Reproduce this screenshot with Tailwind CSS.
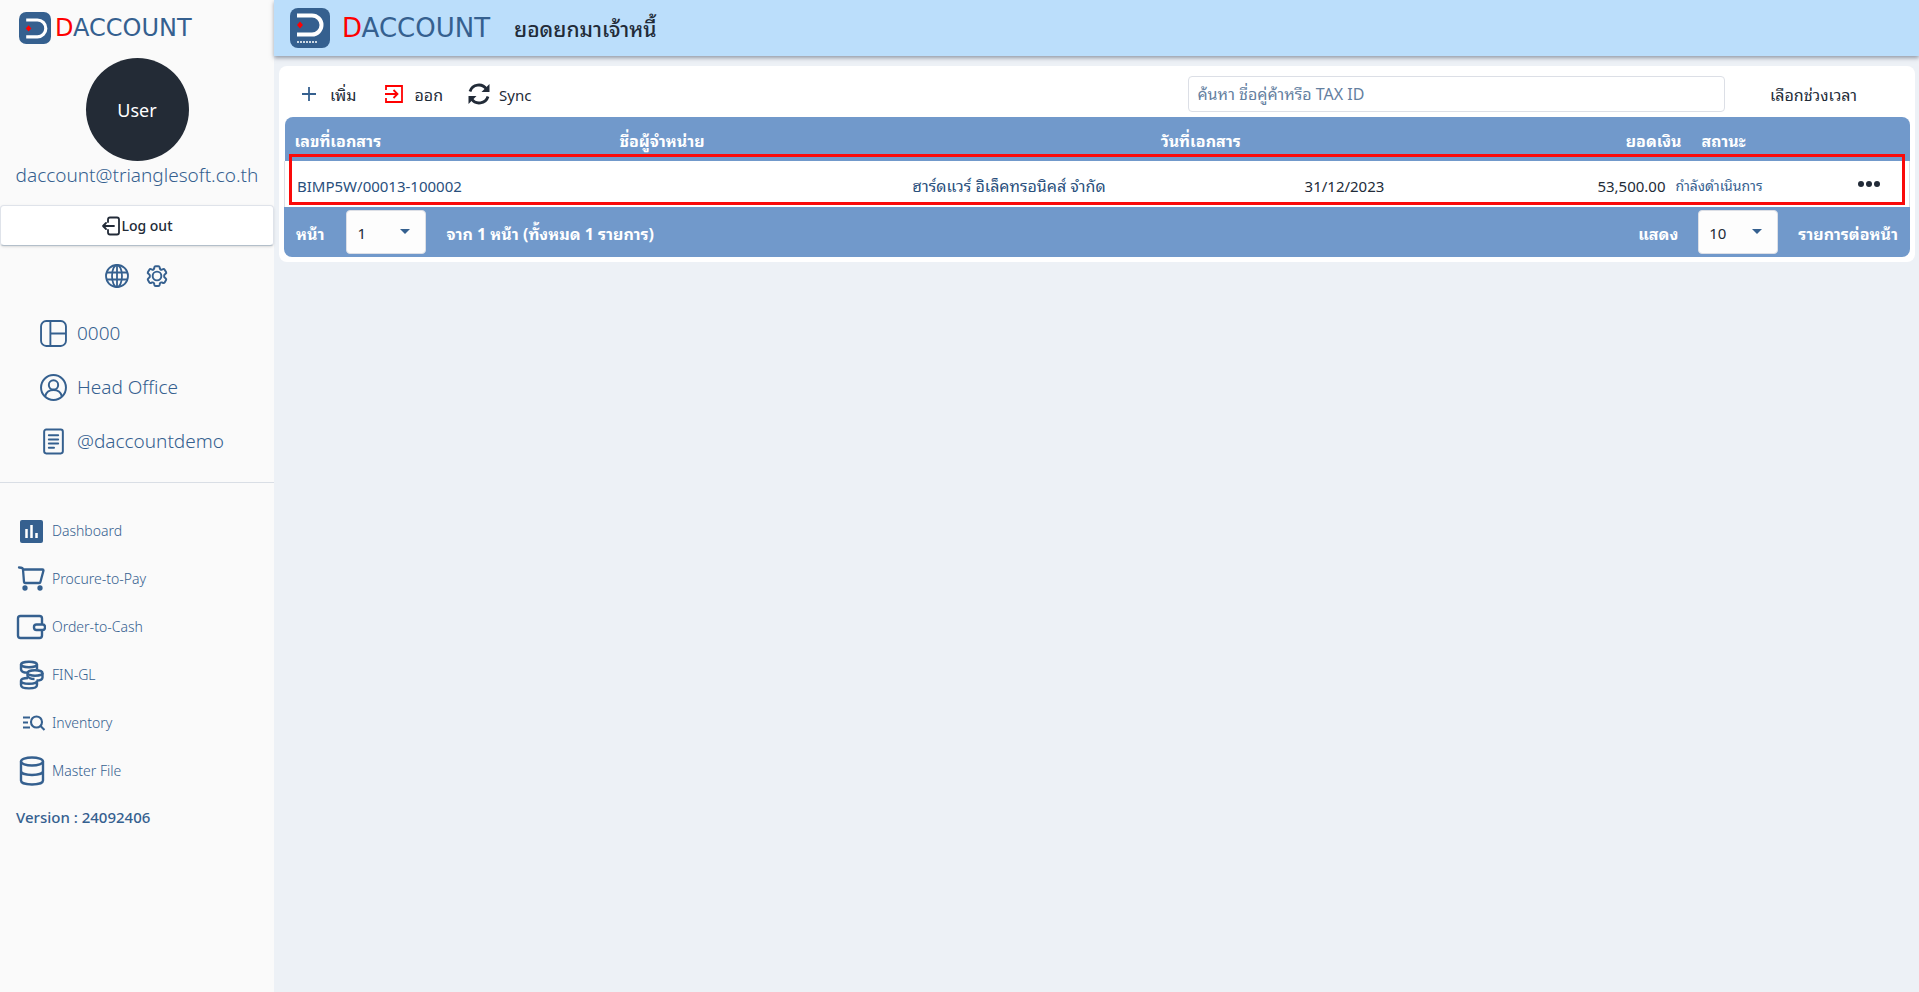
<!DOCTYPE html>
<html lang="th">
<head>
<meta charset="utf-8">
<title>DAccount</title>
<script src="https://cdn.jsdelivr.net/npm/@tailwindcss/browser@4"></script>
</head>
<body class="flex min-h-screen bg-[#edf1f6] font-['Noto_Sans','Noto_Sans_Thai_Looped','Noto_Looped_Thai','Loma','Noto_Sans_Thai',sans-serif] text-base text-[#222b38]">

<aside class="flex w-[274px] shrink-0 flex-col bg-[#fafafa] text-[#35608f]">
  <a href="#" class="flex h-14 items-center gap-1 pl-[19px]" aria-label="DACCOUNT">
    <svg class="size-8 shrink-0" viewBox="0 0 40 40" fill="none"><rect width="40" height="40" rx="9" fill="#35608f"/><path d="M9 10h14a10.500 10.500 0 0 1 0 21H9" stroke="#fff" stroke-width="4"/><path d="M12 16.500l3.500 4-3.500 4-3.500-4z" fill="#f00"/></svg>
    <span class="font-['DejaVu_Sans',sans-serif] text-2xl leading-8"><span class="text-[#ff0000]">D</span>ACCOUNT</span>
  </a>
  <div class="mx-auto mt-0.5 flex size-[103px] items-center justify-center rounded-full bg-[#232b36] text-lg text-white">User</div>
  <p class="text-center text-[19px] font-light leading-7">daccount@trianglesoft.co.th</p>
  <button class="mt-4 flex h-[41px] w-full items-center justify-center rounded border border-[#dfe3ea] border-b-[#b3bfca] bg-white text-sm font-medium text-[#222b38] shadow-sm">
    <svg class="size-5" viewBox="0 0 20 20" fill="none" stroke="currentColor" stroke-width="1.800" stroke-linecap="round" stroke-linejoin="round"><path d="M7 6V3.500Q7 1.500 9 1.500h7q2 0 2 2v13q0 2-2 2H9q-2 0-2-2V14M13 10H2M5 7l-3 3 3 3"/></svg>
    Log out
  </button>
  <div class="mt-[18px] flex justify-center gap-4">
    <button aria-label="Language"><svg class="size-6" viewBox="0 0 24 24" fill="none" stroke="currentColor" stroke-width="1.800"><circle cx="12" cy="12" r="11"/><ellipse cx="12" cy="12" rx="5" ry="11"/><path d="M12 1v22M2 8.500h20M2 15.500h20"/></svg></button>
    <button aria-label="Settings"><svg class="size-6" viewBox="1 1 22 22" fill="none" stroke="currentColor" stroke-width="1.800" stroke-linejoin="round"><path d="M9.600 3.900c.1-.5.600-.9 1.100-.9h2.600c.5 0 1 .4 1.100.9l.2 1.300c.1.400.3.700.7.900.3.200.7.200 1.100.1l1.200-.5c.5-.2 1.100 0 1.400.5l1.300 2.200c.3.500.2 1.100-.3 1.400l-1 .8c-.3.200-.4.600-.4 1v.8c0 .4.100.8.400 1l1 .8c.5.400.6 1 .3 1.500L19 17.900c-.3.500-.9.700-1.400.5l-1.200-.5c-.4-.1-.8-.1-1.100.1-.4.200-.6.500-.7.900l-.2 1.300c-.1.500-.6.900-1.100.9h-2.600c-.5 0-1-.4-1.100-.9l-.2-1.300c-.1-.4-.3-.7-.7-.9-.3-.2-.7-.2-1.100-.1l-1.200.5c-.5.200-1.100 0-1.400-.5l-1.300-2.200c-.3-.5-.2-1.100.3-1.500l1-.8c.3-.2.4-.6.400-1v-.8c0-.4-.1-.8-.4-1l-1-.8c-.5-.3-.6-.9-.3-1.400L5 6.200c.3-.5.900-.7 1.400-.5l1.200.5c.4.100.8.100 1.100-.1.400-.2.600-.5.700-.9z"/><circle cx="12" cy="12" r="4"/></svg></button>
  </div>
  <ul class="mt-[18px] pl-10 text-[19px] font-light">
    <li class="flex h-[54px] items-center gap-2.5"><svg class="size-[27px]" viewBox="0 0 26 26" fill="none" stroke="currentColor" stroke-width="1.800"><rect x="1" y="1" width="24" height="24" rx="5"/><path d="M10 1v24M10 13h15"/></svg>0000</li>
    <li class="flex h-[54px] items-center gap-2.5"><svg class="size-[27px]" viewBox="0 0 26 26" fill="none" stroke="currentColor" stroke-width="1.900"><circle cx="13" cy="13" r="12"/><circle cx="13" cy="10.500" r="4.500"/><path d="M5 21.500c2-8 14-8 16 0"/></svg>Head Office</li>
    <li class="flex h-[54px] items-center gap-2.5"><svg class="size-[27px]" viewBox="0 0 26 26" fill="none" stroke="currentColor" stroke-width="1.900" stroke-linecap="round"><rect x="4" y="1.500" width="18" height="23" rx="2"/><path d="M8.500 7h9M8.500 11h9M8.500 15h9M8.500 19h5"/></svg>@daccountdemo</li>
  </ul>
  <hr class="mt-3.5 border-[#d9dee5]">
  <nav class="mt-6 flex flex-col pl-4 text-sm font-light">
    <a href="#" class="flex h-12 items-center gap-1.5"><svg class="size-[30px]" viewBox="0 0 30 30"><rect x="4" y="4" width="23" height="23" rx="2" fill="currentColor"/><path d="M10.500 22v-9M15.500 22V9M20.500 22v-5" stroke="#fff" stroke-width="2.500"/></svg>Dashboard</a>
    <a href="#" class="flex h-12 items-center gap-1.5"><svg class="size-[30px]" viewBox="0 0 30 30" fill="none" stroke="currentColor" stroke-width="2.300" stroke-linecap="round" stroke-linejoin="round"><path d="M3 3.500q4 0 4 2l1 12.500q.2 1 1.200 1h14q1 0 1.200-1L27.500 6.500q0-1-1-1H7"/><circle cx="9" cy="24" r="1.500" fill="currentColor"/><circle cx="24" cy="24" r="1.500" fill="currentColor"/></svg>Procure-to-Pay</a>
    <a href="#" class="flex h-12 items-center gap-1.5"><svg class="size-[30px]" viewBox="0 0 30 30" fill="none" stroke="currentColor" stroke-width="2.400"><path d="M26 12V6.500Q26 4 23.500 4h-19Q2 4 2 6.500v17Q2 26 4.500 26h19q2.500 0 2.500-2.500V18"/><rect x="18" y="12.500" width="11" height="5.500" rx="2.500"/></svg>Order-to-Cash</a>
    <a href="#" class="flex h-12 items-center gap-1.5"><svg class="size-[30px]" viewBox="0 0 30 30" fill="none" stroke="currentColor" stroke-width="2.400"><ellipse cx="13" cy="4.500" rx="8" ry="2.800"/><path d="M5 4.500v4.500c0 3 4 4 7 3.500M21 4.500v5"/><ellipse cx="19" cy="13" rx="7.500" ry="2.800"/><path d="M26.500 13v4.500c0 2-3 3-6 3M11.500 13.500v2.500c1 2 4 3 7 3"/><path d="M12 18c-4 0-7 .8-7 2.800s3 3 8 3 8-1.200 8-3M5 20.500v4.500c0 4.500 16 4.500 16 0v-4.500"/></svg>FIN-GL</a>
    <a href="#" class="flex h-12 items-center gap-1.5"><svg class="size-[30px]" viewBox="0 0 30 30" fill="none" stroke="currentColor" stroke-width="2.100"><path d="M7 9.500h7M7 14.500h5M7 19.500h7M24 17.500l4.500 4.500"/><circle cx="20.500" cy="14" r="5.500"/></svg>Inventory</a>
    <a href="#" class="flex h-12 items-center gap-1.5"><svg class="size-[30px]" viewBox="0 0 30 30" fill="none" stroke="currentColor" stroke-width="2.400"><ellipse cx="16" cy="5.500" rx="11" ry="4"/><path d="M5 5.500v19c0 5.300 22 5.300 22 0v-19M5 15c0 5.300 22 5.300 22 0"/></svg>Master File</a>
  </nav>
  <p class="mt-3 pl-4 text-[15px] font-medium leading-5">Version : 24092406</p>
</aside>

<div class="flex min-w-0 grow flex-col">
  <header class="flex h-14 items-center bg-[#bbdefb] pl-4 shadow-[0_2px_4px_rgba(60,70,90,0.500)]">
    <svg class="size-10 shrink-0" viewBox="0 0 40 40" fill="none"><rect width="40" height="40" rx="8" fill="#35608f"/><path d="M7 7.500h15a9.500 9.500 0 0 1 0 19H7" stroke="#fff" stroke-width="4"/><path d="M10 13.500l3 3.500-3 3.500L7 17z" fill="#f00"/><path d="M7 34h21" stroke="#fff" stroke-dasharray="2 1" stroke-width="1.500"/></svg>
    <span class="ml-3 font-['DejaVu_Sans',sans-serif] text-[26px] leading-8 text-[#35608f]"><span class="text-[#ff0000]">D</span>ACCOUNT</span>
    <h1 class="ml-6 pt-1 text-[21px] font-medium">ยอดยกมาเจ้าหนี้</h1>
  </header>
  <main class="ml-[5px] mr-1 mt-2.5 rounded-lg bg-white p-[5px]">
    <div class="flex h-[46px] items-center">
      <button class="ml-4 flex items-center gap-3"><svg class="size-[18px]" viewBox="0 0 18 18" stroke="#35608f" stroke-width="1.800"><path d="M9 2v14M2 9h14"/></svg><span class="pt-0.5">เพิ่ม</span></button>
      <button class="ml-7 flex items-center gap-2.5"><svg class="size-5" viewBox="0 0 20 20" fill="none" stroke="#f00" stroke-width="1.800"><path d="M2 6V2h16v16H2v-4M1 10h12M9.500 6l4 4-4 4"/></svg><span class="pt-0.5">ออก</span></button>
      <button class="ml-6 flex items-center gap-2 text-[15px]"><svg class="size-6" viewBox="0 0 24 24" fill="none" stroke="currentColor" stroke-width="2.800"><path d="M3 9.500a9.200 9.200 0 0 1 16.500-2.300M21 14.500a9.200 9.200 0 0 1-16.500 2.300"/><path d="M22.500 2v8h-8zM1.500 22v-8h8z" fill="currentColor" stroke="none"/></svg><span class="pt-0.5">Sync</span></button>
      <input type="text" aria-label="ค้นหา" placeholder="ค้นหา ชื่อคู่ค้าหรือ TAX ID" class="ml-auto h-9 w-[33%] rounded border border-[#dcdfe6] px-2 text-base placeholder:text-[#64809f]">
      <button class="w-[185px] pr-2 pt-0.5 text-center">เลือกช่วงเวลา</button>
    </div>
    <div class="relative">
      <table class="w-full table-fixed border-collapse">
        <colgroup><col class="w-[20%]"><col class="w-[33.3%]"><col class="w-[15%]"><col><col class="w-4"><col class="w-[148px]"><col class="w-[70px]"></colgroup>
        <thead class="text-left text-white">
          <tr class="h-11">
            <th class="rounded-tl-lg bg-[#7199cb] pl-2.5 pt-1 font-bold">เลขที่เอกสาร</th>
            <th class="bg-[#7199cb] pl-2.5 pt-1 font-bold">ชื่อผู้จำหน่าย</th>
            <th class="bg-[#7199cb] pl-2.5 pt-1 font-bold">วันที่เอกสาร</th>
            <th colspan="2" class="bg-[#7199cb] pr-2.5 pt-1 text-right font-bold">ยอดเงิน</th>
            <th class="bg-[#7199cb] pl-2.5 pt-1 font-bold">สถานะ</th>
            <th class="rounded-tr-lg bg-[#7199cb]" aria-label="เมนู"></th>
          </tr>
        </thead>
        <tbody>
          <tr class="h-[46px] border-x border-[#dcdfe6]">
            <td class="pl-3 pt-1 text-[15px] text-[#294f7c]">BIMP5W/00013-100002</td>
            <td class="pr-[45px] pt-1 text-right text-[#294f7c]">ฮาร์ดแวร์ อิเล็คทรอนิคส์ จำกัด</td>
            <td class="pr-2.5 pt-1 text-right text-[15px]">31/12/2023</td>
            <td class="pr-2.5 pt-1 text-right text-[15px]">53,500.00</td>
            <td colspan="2" class="pt-1 text-sm text-[#35608f]">กำลังดำเนินการ</td>
            <td><button class="ml-[18px] block" aria-label="ตัวเลือก"><svg class="h-2 w-[22px]" viewBox="0 0 22 8" fill="currentColor"><circle cx="3" cy="4" r="3"/><circle cx="11" cy="4" r="3"/><circle cx="19" cy="4" r="3"/></svg></button></td>
          </tr>
        </tbody>
      </table>
      <div class="pointer-events-none absolute inset-x-[5px] top-[37px] h-[51px] border-3 border-[#fa0a0a]"></div>
    </div>
    <div class="flex h-[50px] items-center rounded-b-lg bg-[#7199cb] px-3 font-bold text-white">
      <label for="page" class="pt-1">หน้า</label>
      <span class="relative ml-[22px] flex"><select id="page" class="h-11 w-20 appearance-none rounded border border-[#dcdfe6] bg-[#fdfdfd] pl-2.5 pt-0.5 text-[15px] font-normal text-[#222b38]"><option>1</option></select><svg class="pointer-events-none absolute right-4 top-[19px] h-[5px] w-2.5" viewBox="0 0 10 5"><path d="M0 0h10L5 5z" fill="#35608f"/></svg></span>
      <span class="ml-5 pt-1">จาก 1 หน้า (ทั้งหมด 1 รายการ)</span>
      <label for="size" class="ml-auto pt-1">แสดง</label>
      <span class="relative mx-5 flex"><select id="size" class="h-11 w-20 appearance-none rounded border border-[#dcdfe6] bg-[#fdfdfd] pl-2.5 pt-0.5 text-[15px] font-normal text-[#222b38]"><option>10</option></select><svg class="pointer-events-none absolute right-4 top-[19px] h-[5px] w-2.5" viewBox="0 0 10 5"><path d="M0 0h10L5 5z" fill="#35608f"/></svg></span>
      <span class="pt-1">รายการต่อหน้า</span>
    </div>
  </main>
</div>
</body>
</html>
